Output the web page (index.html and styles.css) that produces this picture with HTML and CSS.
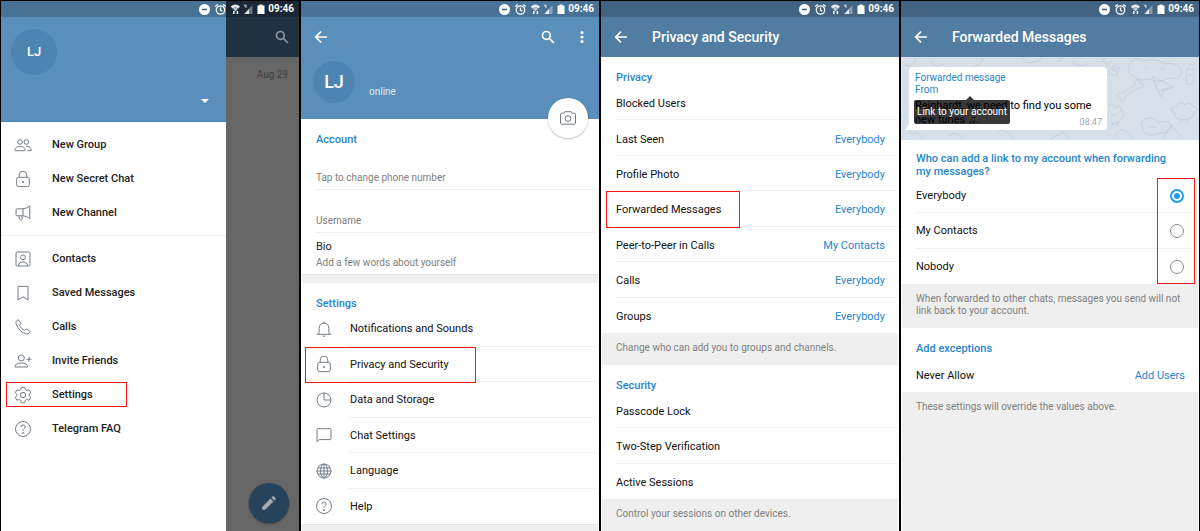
FILE: index.html
```
<!DOCTYPE html>
<html lang="en">
<head>
    <meta charset="UTF-8">
    <title>Telegram - Forwarded Messages privacy</title>
    <link rel="stylesheet" href="styles.css">
</head>
<body>

<!-- Shared icons -->
<svg class="sprite" aria-hidden="true">
    <symbol id="i-dnd" viewBox="0 0 13 13"><circle cx="6.5" cy="6.5" r="5.5" fill="#fff"/><path d="M4 6.5h5" stroke="#46698a" stroke-width="1.6"/></symbol>
    <symbol id="i-alarm" viewBox="0 0 13 13"><g fill="none" stroke="#fff" stroke-width="1.3"><circle cx="6.5" cy="7" r="4.2"/><path d="M1.2 3.6L3.8 1.4M11.8 3.6L9.2 1.4M6.5 4.6V7.2L8.2 8.3"/></g></symbol>
    <symbol id="i-wifi" viewBox="0 0 10 12"><path d="M.8 3.4Q5.400 -.4 10 3.400L8.400 5.600Q5.400 3.200 2.400 5.600Z" fill="#e4ebf1"/><path d="M2.800 5.800Q5.400 3.800 8 5.800L5.400 8.500Z" fill="#b9c8d6"/><path d="M3.800 8v3M7.400 8v3" stroke="#fff" stroke-width="1.5"/></symbol>
    <symbol id="i-signal" viewBox="0 0 10 12"><path d="M9.5 2v9H1z" fill="#fff" opacity=".35"/><path d="M6 6v5H1.5z" fill="#fff" opacity=".8"/><path d="M1 1.5L3 4.5M3 1.5v3" stroke="#fff" opacity=".8"/></symbol>
    <symbol id="i-battery" viewBox="0 0 9 12"><path d="M1.500 2.500h2V1.500h3v1h2V11h-7z" fill="#fff"/></symbol>
    <symbol id="i-back" viewBox="0 0 14 14"><path d="M13 7H2M7 1.7L1.7 7 7 12.3" fill="none" stroke="#fff" stroke-width="1.7"/></symbol>
    <symbol id="i-search" viewBox="0 0 14 14"><g fill="none" stroke="currentColor" stroke-width="1.7"><circle cx="5.4" cy="5.4" r="3.9"/><path d="M8.3 8.3L13 13"/></g></symbol>
    <symbol id="i-dots" viewBox="0 0 4 14"><g fill="#fff"><circle cx="2" cy="2.5" r="1.6"/><circle cx="2" cy="7" r="1.6"/><circle cx="2" cy="11.5" r="1.6"/></g></symbol>
    <symbol id="i-group" viewBox="0 0 18 18"><circle cx="6" cy="6" r="2.3"/><circle cx="12.3" cy="6" r="2.3"/><path d="M.8 14.2c0-2.600 2.500-3.800 5.200-3.800s5.200 1.200 5.200 3.800q0 .5-.6.500H1.400q-.6 0-.6-.5zM12 10.300c3 0 5.300 1.200 5.300 3.900q0 .5-.6.500h-3.400"/></symbol>
    <symbol id="i-lock" viewBox="0 0 18 18"><rect x="2.700" y="7.300" width="12.600" height="9.300" rx="1.800"/><path d="M5.200 7.300V5a3.800 3.800 0 0 1 7.600 0v2.300"/><circle cx="9" cy="12" r=".6" fill="currentColor"/></symbol>
    <symbol id="i-channel" viewBox="0 0 18 18"><path d="M3.300 4.800H9v7H3.300Q2 11.800 2 10.500V6.100Q2 4.800 3.300 4.800zM9 4.800Q12.500 4.500 15.800 2v12.600Q12.500 12 9 11.800M4.800 11.800l1 3.200q.5 1.300 1.700.8t.7-1.700L7.800 11.800"/></symbol>
    <symbol id="i-contact" viewBox="0 0 18 18"><rect x="2" y="2" width="14" height="14" rx="1.200"/><circle cx="9" cy="7.300" r="2.400"/><path d="M4.500 16q0-4 4.500-4t4.500 4"/></symbol>
    <symbol id="i-bookmark" viewBox="0 0 18 18"><path d="M4 2.300h10v13.700l-5-3.200-5 3.200z" stroke-linejoin="round"/></symbol>
    <symbol id="i-phone" viewBox="0 0 18 18"><path d="M3.200 2.200q1-.8 1.900.3l1.500 2.200q.6 1-.3 1.800l-.9.900q1.600 3.300 5 5l1-.9q.8-.8 1.700-.2l2.400 1.600q1 .8.2 1.700-1.500 1.900-3.300 1.400Q4.700 13.700 2 5.600q-.4-2.100 1.200-3.400z"/></symbol>
    <symbol id="i-invite" viewBox="0 0 18 18"><circle cx="7.300" cy="6" r="3"/><path d="M1 15q0-4 6.300-4t6.300 4zM12.500 7.300h5M15 4.800v5"/></symbol>
    <symbol id="i-gear" viewBox="0 0 18 18"><path d="M7.300 1.300h3.400l.6 2.300 1.500.9 2.300-.7 1.700 2.900-1.700 1.600v1.400l1.700 1.600-1.700 2.900-2.300-.7-1.500.9-.6 2.300H7.300l-.6-2.300-1.500-.9-2.300.7-1.700-2.900 1.700-1.600V8.300L1.200 6.700l1.700-2.900 2.300.7 1.500-.9z" stroke-linejoin="round"/><circle cx="9" cy="9" r="2.700"/></symbol>
    <symbol id="i-help" viewBox="0 0 18 18"><circle cx="9" cy="9" r="7.500"/><path d="M6.800 7.200Q6.900 5 9 5t2.200 1.900Q11.200 8 10 8.700T9 10.800"/><circle cx="9" cy="12.900" r=".5" fill="currentColor"/></symbol>
    <symbol id="i-bell" viewBox="0 0 18 18"><path d="M1.800 14.300h14.400M3.300 14.300q.9-1 .9-3V8.300Q4.200 3.400 9 3.200q4.800.2 4.800 5.100v3q0 2 .9 3M9 3.200V1.300M7.600 15.700q1.400 1.600 2.800 0"/></symbol>
    <symbol id="i-data" viewBox="0 0 18 18"><circle cx="9" cy="9" r="7"/><path d="M9 2v7h7"/></symbol>
    <symbol id="i-chat" viewBox="0 0 18 18"><path d="M2 15.800V3.500q0-.8.800-.8h12.400q.8 0 .8.800v9.300q0 .8-.8.800H4.200z" stroke-linejoin="round"/></symbol>
    <symbol id="i-globe" viewBox="0 0 18 18"><circle cx="9" cy="9" r="7"/><ellipse cx="9" cy="9" rx="3.500" ry="7"/><path d="M9 2v14M2.800 6h12.400M2.800 12h12.400M2 9h14"/></symbol>
    <symbol id="i-camera" viewBox="0 0 18 18"><path d="M2.500 4.200H5l.8-1.500h6.400l.8 1.500h2.500q1 0 1 1v9q0 1-1 1h-13q-1 0-1-1v-9q0-1 1-1z"/><circle cx="9" cy="9.500" r="2.800"/></symbol>
    <symbol id="i-pencil" viewBox="0 0 14 14"><path d="M1 13v-2.600L8.300 3.100l2.600 2.600L3.600 13zM9.100 2.300l1.100-1.100q.5-.4 1 0l1.600 1.600q.4.500 0 1L11.700 4.900z" fill="#a3abb1"/></symbol>
</svg>

<main class="screens">

    <!-- 1. Drawer -->
    <section class="screen">
        <div class="status-bar">
            <svg width="13" height="13"><use href="#i-dnd"/></svg>
            <svg width="13" height="13"><use href="#i-alarm"/></svg>
            <svg width="10" height="12"><use href="#i-wifi"/></svg>
            <svg width="10" height="12"><use href="#i-signal"/></svg>
            <svg width="9" height="12"><use href="#i-battery"/></svg>
            <span>09:46</span>
        </div>
        <div class="dimmed">
            <div class="dimmed-bar">
                <svg width="14" height="14"><use href="#i-search"/></svg>
            </div>
            <p class="chat-date">Aug 29</p>
            <button class="compose" type="button" aria-label="New message">
                <svg width="16" height="16"><use href="#i-pencil"/></svg>
            </button>
        </div>
        <nav class="drawer">
            <div class="drawer-header">
                <div class="avatar avatar-small">LJ</div>
                <span class="caret"></span>
            </div>
            <ul class="menu">
                <li><a href="#"><svg class="icon"><use href="#i-group"/></svg>New Group</a></li>
                <li><a href="#"><svg class="icon"><use href="#i-lock"/></svg>New Secret Chat</a></li>
                <li><a href="#"><svg class="icon"><use href="#i-channel"/></svg>New Channel</a></li>
            </ul>
            <ul class="menu menu-second">
                <li><a href="#"><svg class="icon"><use href="#i-contact"/></svg>Contacts</a></li>
                <li><a href="#"><svg class="icon"><use href="#i-bookmark"/></svg>Saved Messages</a></li>
                <li><a href="#"><svg class="icon"><use href="#i-phone"/></svg>Calls</a></li>
                <li><a href="#"><svg class="icon"><use href="#i-invite"/></svg>Invite Friends</a></li>
                <li><a href="#" class="marked mark-menu"><svg class="icon"><use href="#i-gear"/></svg>Settings</a></li>
                <li><a href="#"><svg class="icon"><use href="#i-help"/></svg>Telegram FAQ</a></li>
            </ul>
        </nav>
    </section>

    <!-- 2. Settings -->
    <section class="screen">
        <div class="status-bar on-profile">
            <svg width="13" height="13"><use href="#i-dnd"/></svg>
            <svg width="13" height="13"><use href="#i-alarm"/></svg>
            <svg width="10" height="12"><use href="#i-wifi"/></svg>
            <svg width="10" height="12"><use href="#i-signal"/></svg>
            <svg width="9" height="12"><use href="#i-battery"/></svg>
            <span>09:46</span>
        </div>
        <header class="profile">
            <div class="toolbar">
                <button type="button" aria-label="Back"><svg width="14" height="14"><use href="#i-back"/></svg></button>
                <button type="button" aria-label="Search" class="push"><svg width="14" height="14"><use href="#i-search"/></svg></button>
                <button type="button" aria-label="More"><svg width="4" height="14"><use href="#i-dots"/></svg></button>
            </div>
            <div class="who">
                <div class="avatar">LJ</div>
                <span class="online">online</span>
            </div>
            <button class="camera" type="button" aria-label="Change photo"><svg class="icon"><use href="#i-camera"/></svg></button>
        </header>
        <h2>Account</h2>
        <div class="field">Tap to change phone number</div>
        <div class="field">Username</div>
        <div class="bio">
            <strong>Bio</strong>
            <span>Add a few words about yourself</span>
        </div>
        <div class="band"></div>
        <h2>Settings</h2>
        <ul class="rows rows-six with-icons">
            <li><svg class="icon"><use href="#i-bell"/></svg><a href="#">Notifications and Sounds</a></li>
            <li class="marked mark-settings"><svg class="icon"><use href="#i-lock"/></svg><a href="#">Privacy and Security</a></li>
            <li><svg class="icon"><use href="#i-data"/></svg><a href="#">Data and Storage</a></li>
            <li><svg class="icon"><use href="#i-chat"/></svg><a href="#">Chat Settings</a></li>
            <li><svg class="icon"><use href="#i-globe"/></svg><a href="#">Language</a></li>
            <li><svg class="icon"><use href="#i-help"/></svg><a href="#">Help</a></li>
        </ul>
        <div class="band fill"></div>
    </section>

    <!-- 3. Privacy and Security -->
    <section class="screen">
        <div class="status-bar on-bar">
            <svg width="13" height="13"><use href="#i-dnd"/></svg>
            <svg width="13" height="13"><use href="#i-alarm"/></svg>
            <svg width="10" height="12"><use href="#i-wifi"/></svg>
            <svg width="10" height="12"><use href="#i-signal"/></svg>
            <svg width="9" height="12"><use href="#i-battery"/></svg>
            <span>09:46</span>
        </div>
        <header class="toolbar titled">
            <button type="button" aria-label="Back"><svg width="14" height="14"><use href="#i-back"/></svg></button>
            <h1>Privacy and Security</h1>
        </header>
        <h2>Privacy</h2>
        <ul class="rows rows-seven">
            <li><a href="#">Blocked Users</a></li>
            <li><a href="#">Last Seen <span>Everybody</span></a></li>
            <li><a href="#">Profile Photo <span>Everybody</span></a></li>
            <li class="marked mark-forwarded"><a href="#">Forwarded Messages <span>Everybody</span></a></li>
            <li><a href="#">Peer-to-Peer in Calls <span>My Contacts</span></a></li>
            <li><a href="#">Calls <span>Everybody</span></a></li>
            <li><a href="#">Groups <span>Everybody</span></a></li>
        </ul>
        <p class="note">Change who can add you to groups and channels.</p>
        <h2>Security</h2>
        <ul class="rows rows-three">
            <li><a href="#">Passcode Lock</a></li>
            <li><a href="#">Two-Step Verification</a></li>
            <li><a href="#">Active Sessions</a></li>
        </ul>
        <p class="note fill">Control your sessions on other devices.</p>
    </section>

    <!-- 4. Forwarded Messages -->
    <section class="screen">
        <div class="status-bar on-bar">
            <svg width="13" height="13"><use href="#i-dnd"/></svg>
            <svg width="13" height="13"><use href="#i-alarm"/></svg>
            <svg width="10" height="12"><use href="#i-wifi"/></svg>
            <svg width="10" height="12"><use href="#i-signal"/></svg>
            <svg width="9" height="12"><use href="#i-battery"/></svg>
            <span>09:46</span>
        </div>
        <header class="toolbar titled">
            <button type="button" aria-label="Back"><svg width="14" height="14"><use href="#i-back"/></svg></button>
            <h1>Forwarded Messages</h1>
        </header>
        <div class="preview">
            <svg class="doodles" viewBox="0 0 298 83" preserveAspectRatio="xMaxYMid slice" aria-hidden="true">
                <g fill="none" stroke="#c6d0dc" stroke-width="1">
                    <path d="M221 36l13-8q-1-5 3-5 2 0 2 3 4 0 3 3t-5 2l-13 8q1 5-3 5-2 0-2-3-4 0-3-3t5-2z"/>
                    <path d="M251 19l21 11-9 3-3 7-3-6zM272 30l-15 4"/>
                    <path d="M285 22q0-15 8-15v19q-8 5-8-4zM288 12h5M287 18h5"/>
                    <path d="M228 8q6-10 14-4 12-4 21 3 15-3 18 8-3 9-14 6-8 6-19 1-10 3-16-3-7-4-4-11zM244 9l3 3M258 11q3 3 6 0"/>
                    <path d="M201 3l14 12M203 11l8-8M207 15l8-8M213 12l5-2-2 8-8 0zM201 3l5-2"/>
                    <path d="M207 49q5-4 7 2 6-5 6 3 5 2 1 7-4 7-11 5M209 57q3 3 6 0M212 66l-2 4M216 65l1 4"/>
                    <path d="M276 48q4-5 8 0 5-4 8 1 6 1 2 6-3 9-13 8-8-1-8-8l-4-3 5-2zM280 63l-1 4M286 63l1 4"/>
                    <path d="M213 80q6-10 12-6t8 9M240 65q10-9 18 1 8-5 13 3-2 9-12 7-11 5-17-2zM246 70h9"/>
                    <path d="M262 81l8-13 11 13M122 0q3 8 12 5t5-8M82 1q-1 9-12 8M3 8q8 4 12-6M48 79q8-6 14 3M96 75q8-6 18 8M149 82l14-7 6 8M12 76q6-3 10 7M170 4q8 8 18 2M30 4q4 8 14 3M156 5l7-6"/>
                </g>
            </svg>
            <div class="bubble">
                <p class="forwarded">Forwarded message<br>From</p>
                <p class="message">Reinhardt, we need to find you some new tunes ♫.</p>
                <time>08:47</time>
                <div class="tooltip">Link to your account</div>
            </div>
        </div>
        <h2 class="question" id="who-label">Who can add a link to my account when forwarding my messages?</h2>
        <div class="rows rows-three choices" role="radiogroup" aria-labelledby="who-label">
            <label>Everybody <input type="radio" name="who" checked></label>
            <label>My Contacts <input type="radio" name="who"></label>
            <label>Nobody <input type="radio" name="who"></label>
        </div>
        <p class="note">When forwarded to other chats, messages you send will not link back to your account.</p>
        <h2>Add exceptions</h2>
        <ul class="rows">
            <li><a href="#">Never Allow <span>Add Users</span></a></li>
        </ul>
        <p class="note fill">These settings will override the values above.</p>
    </section>

</main>

</body>
</html>
```
FILE: styles.css
```
*, *::before, *::after {
    box-sizing: border-box;
}
body {
    margin: 0;
    background-color: #000;
    color: #222;
    font-family: Roboto, "Liberation Sans", sans-serif;
    font-size: 12px;
    line-height: 16px;
}
h1, h2, p, ul {
    margin: 0;
    padding: 0;
}
ul {
    list-style: none;
}
a {
    color: inherit;
    text-decoration: none;
}
button {
    display: flex;
    align-items: center;
    justify-content: center;
    padding: 0;
    border: none;
    background: none;
    color: #fff;
    cursor: pointer;
}
svg {
    flex: none;
}
.sprite {
    position: absolute;
    width: 0;
    height: 0;
}
.icon {
    width: 18px;
    height: 18px;
    fill: none;
    stroke: currentColor;
    stroke-width: 1px;
    color: #737d87;
}
.screens {
    display: grid;
    grid-template-columns: repeat(4, 1fr);
    gap: 2px;
    min-height: 100vh;
    padding: 1px 1px 2px;
}
.screen {
    position: relative;
    display: flex;
    flex-direction: column;
    background-color: #fff;
}

/* Status bar */
.status-bar {
    position: relative;
    z-index: 2;
    display: flex;
    align-items: center;
    justify-content: flex-end;
    gap: 3px;
    height: 16px;
    padding-right: 5px;
    background-color: rgba(0, 0, 0, 0.2);
    color: #fff;
    font-size: 10px;
    font-weight: 700;
}
.on-profile {
    background-color: #487297;
}
.on-bar {
    background-color: #426482;
}

/* Toolbars */
.toolbar {
    display: flex;
    align-items: center;
    height: 40px;
    padding: 0 15px 0 13px;
}
.titled {
    gap: 24px;
    background-color: #527da3;
    color: #fff;
}
.toolbar h1 {
    font-size: 14px;
    font-weight: 500;
}
.push {
    margin: 0 25px 0 auto;
}

/* Drawer */
.dimmed {
    display: flex;
    flex: 1;
    flex-direction: column;
    align-items: flex-end;
    margin-top: -16px;
    background-color: #666;
}
.dimmed-bar {
    display: flex;
    justify-content: flex-end;
    width: 100%;
    height: 56px;
    padding: 29px 10px 0 0;
    background-color: #203242;
    color: #8c959c;
}
.chat-date {
    padding: 10px 11px 0 0;
    color: #404040;
    font-size: 10px;
}
.compose {
    width: 40px;
    height: 40px;
    margin: auto 10px 8px 0;
    border-radius: 50%;
    background-color: #26435b;
    box-shadow: 0 1px 2px rgba(0, 0, 0, 0.4);
}
.drawer {
    position: absolute;
    top: 0;
    bottom: 0;
    left: 0;
    width: 225px;
    background-color: #fff;
}
.drawer-header {
    display: flex;
    align-items: flex-start;
    justify-content: space-between;
    height: 121px;
    padding: 28px 17px 0 10px;
    border-bottom: 1px solid #3f82b8;
    background-color: #5a8fbb;
}
.caret {
    margin-top: 70px;
    border: 4px solid transparent;
    border-top-color: #fff;
    border-bottom: 0;
}
.avatar {
    display: flex;
    align-items: center;
    justify-content: center;
    width: 42px;
    height: 42px;
    border-radius: 50%;
    background-color: #4e84b1;
    color: #fff;
    font-size: 18px;
    font-weight: 500;
}
.avatar-small {
    width: 46px;
    height: 46px;
    font-size: 13px;
}
.menu {
    padding: 6px 0 5px;
    font-size: 11px;
    font-weight: 500;
}
.menu-second {
    border-top: 1px solid #ececec;
}
.menu a {
    display: flex;
    align-items: center;
    gap: 20px;
    height: 34px;
    padding-left: 13px;
}

/* Red frames round the item to tap */
.marked {
    position: relative;
}
.marked::after {
    content: "";
    position: absolute;
    top: 0;
    bottom: -1px;
    left: 4px;
    border: 1px solid #ff1515;
}
.mark-menu::after {
    top: 4px;
    bottom: 5px;
    left: 5px;
    width: 121px;
}
.mark-settings::after {
    width: 171px;
}
.mark-forwarded::after {
    left: 5px;
    width: 134px;
}

/* Settings */
.profile {
    position: relative;
    height: 102px;
    background-color: #5a8fbb;
}
.who {
    display: flex;
    gap: 14px;
    padding: 4px 0 0 12px;
}
.online {
    padding-top: 23px;
    color: #e0ebf5;
    font-size: 10px;
}
.camera {
    position: absolute;
    right: 11px;
    bottom: -19px;
    width: 40px;
    height: 40px;
    border-radius: 50%;
    background-color: #fff;
    box-shadow: 0 1px 2px rgba(0, 0, 0, 0.25);
}
h2 {
    padding: 14px 15px 1px;
    color: #2786cb;
    font-size: 11px;
    font-weight: 500;
    line-height: 13px;
}
.field {
    margin: 0 1px 0 14px;
    padding: 23px 0 3px 1px;
    border-bottom: 1px solid #f0f0f0;
    color: #808080;
    font-size: 10px;
}
.bio {
    display: flex;
    flex-direction: column;
    padding: 6px 15px 3px;
    color: #808080;
    font-size: 10px;
}
.bio strong {
    color: #222;
    font-size: 11px;
    font-weight: 400;
}
.band {
    height: 9px;
    margin: 0 1px;
    border-top: 1px solid #e4e4e4;
    background-color: #efefef;
}
.fill {
    flex: 1;
}
.band.fill {
    height: auto;
}

/* Lists */
.rows {
    display: grid;
    grid-auto-rows: 1fr;
    min-height: 36px;
    color: #111;
    font-size: 11px;
}
.rows-three {
    min-height: 106px;
}
.rows-six {
    min-height: 213px;
}
.rows-seven {
    min-height: 248px;
}
.rows li {
    display: flex;
    align-items: center;
    padding: 0 1px 0 14px;
}
.rows li a {
    display: flex;
    flex: 1;
    align-items: center;
    justify-content: space-between;
    align-self: stretch;
    padding: 4px 13px 0 1px;
    border-bottom: 1px solid #f0f0f0;
}
.rows li:last-child a {
    border-bottom: none;
}
.rows li span {
    color: #2786cb;
}
.rows.with-icons li {
    gap: 16px;
}
.rows.with-icons a {
    padding-top: 2px;
}
.note {
    margin: 0 1px;
    padding: 9px 14px 11px;
    background-color: #efefef;
    color: #808080;
    font-size: 10px;
    line-height: 12px;
}

/* Forwarded messages */
.preview {
    position: relative;
    height: 83px;
    padding: 10px 8px;
    overflow: hidden;
    background-color: #d7dfe9;
}
.doodles {
    position: absolute;
    top: 0;
    left: 0;
    width: 100%;
    height: 100%;
}
.bubble {
    position: relative;
    width: 198px;
    padding: 5px 6px 0;
    height: 63px;
    border-radius: 4px 4px 4px 0;
    background-color: #fff;
    color: #000;
}
.bubble::before {
    content: "";
    position: absolute;
    bottom: 0;
    left: -4px;
    border-bottom: 6px solid #fff;
    border-left: 4px solid transparent;
}
.forwarded {
    color: #2786cb;
    font-size: 10px;
    line-height: 12px;
}
.message {
    padding-top: 3px;
    font-size: 11px;
    line-height: 14px;
}
.bubble time {
    position: absolute;
    right: 5px;
    bottom: 0;
    color: #a0a8b0;
    font-size: 9px;
}
.tooltip {
    position: absolute;
    top: 33px;
    left: 5px;
    padding: 4px 3px;
    border-radius: 2px;
    background-color: rgba(0, 0, 0, 0.78);
    color: #fff;
    font-size: 10px;
    white-space: nowrap;
}
.tooltip::before {
    content: "";
    position: absolute;
    top: -4px;
    left: 52px;
    border: 4px solid transparent;
    border-top: 0;
    border-bottom-color: rgba(0, 0, 0, 0.78);
}
.question {
    padding: 12px 30px 0 15px;
}
.choices {
    position: relative;
}
.choices label {
    display: flex;
    align-items: center;
    justify-content: space-between;
    margin: 0 6px 0 14px;
    padding: 2px 9px 0 1px;
    border-bottom: 1px solid #f0f0f0;
}
.choices label:last-child {
    border-bottom: none;
}
.choices::after {
    content: "";
    position: absolute;
    top: 0;
    right: 4px;
    bottom: 0;
    width: 38px;
    border: 1px solid #ff1515;
    pointer-events: none;
}
.choices input {
    width: 14px;
    height: 14px;
    margin: 0;
    border: 1px solid #8c8c8c;
    border-radius: 50%;
    appearance: none;
}
.choices input:checked {
    border: 2px solid #1f9cf0;
    padding: 2px;
    background-color: #1f9cf0;
    background-clip: content-box;
}
```
